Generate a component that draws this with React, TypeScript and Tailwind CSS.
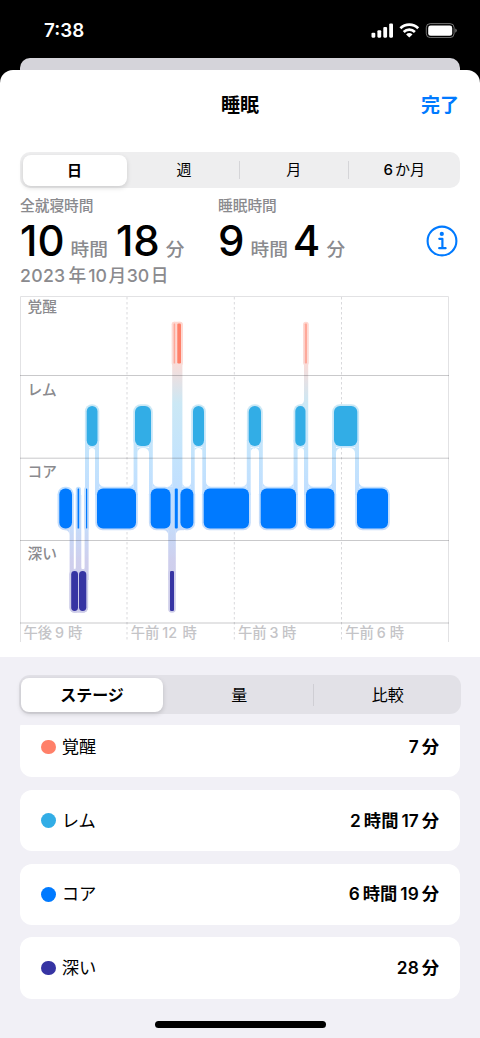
import clsx from "clsx";

type Stage = "awake" | "rem" | "core" | "deep";

interface Segment {
  stage: Stage;
  from: number;
  to: number;
  faded?: boolean;
}

const STAGES: Record<Stage, { label: string; color: string; top: number }> = {
  awake: { label: "覚醒", color: "#ff8069", top: 323.5 },
  rem: { label: "レム", color: "#32ade6", top: 406 },
  core: { label: "コア", color: "#007aff", top: 488.5 },
  deep: { label: "深い", color: "#3634a3", top: 571 },
};

const BLOCK_HEIGHT = 40;

const SEGMENTS: Segment[] = [
  { stage: "core", from: 59.3, to: 72 },
  { stage: "deep", from: 71.2, to: 78 },
  { stage: "core", from: 77.6, to: 79.2 },
  { stage: "deep", from: 79, to: 86.3 },
  { stage: "core", from: 86, to: 87.2 },
  { stage: "rem", from: 86.7, to: 97.5 },
  { stage: "core", from: 97, to: 136 },
  { stage: "rem", from: 135, to: 151 },
  { stage: "core", from: 150.7, to: 170.5 },
  { stage: "deep", from: 170, to: 174 },
  { stage: "awake", from: 173.6, to: 175.2, faded: true },
  { stage: "core", from: 174.8, to: 177.8 },
  { stage: "awake", from: 177.3, to: 181 },
  { stage: "core", from: 180.4, to: 193.4 },
  { stage: "rem", from: 193, to: 204 },
  { stage: "core", from: 203.7, to: 249 },
  { stage: "rem", from: 248.7, to: 261 },
  { stage: "core", from: 260.7, to: 296 },
  { stage: "rem", from: 295.3, to: 305.5 },
  { stage: "awake", from: 304.8, to: 307, faded: true },
  { stage: "core", from: 306, to: 334.4 },
  { stage: "rem", from: 334, to: 357.3 },
  { stage: "core", from: 357, to: 388 },
];

// vertical links between two stages: [x1, x2, y1, y2]
const LINKS = [
  [85, 89, 440, 495],
  [95, 99, 440, 495],
  [133.6, 137.4, 440, 495],
  [149, 152.8, 440, 495],
  [191, 194.7, 440, 495],
  [202.3, 206, 440, 495],
  [246.8, 250.7, 440, 495],
  [259, 262.8, 440, 495],
  [293.6, 297.6, 440, 495],
  [304, 308.2, 330, 495],
  [332, 336, 440, 495],
  [355, 359, 440, 495],
  [172.2, 182.4, 328, 500],
  [69.6, 73.8, 520, 580],
  [75.8, 81.3, 495, 580],
  [84.6, 88.6, 495, 580],
  [168.2, 175.8, 515, 580],
  // keeps the close-set blocks around midnight joined
  [168, 184, 487, 530.2],
];

// concave corners: [x, y, dx, dy, r]
const FILLETS = [
  [89, 448, 1, 1, 3],
  [95, 448, -1, 1, 3],
  [137.4, 448, 1, 1, 5],
  [149, 448, -1, 1, 5],
  [194.7, 448, 1, 1, 3.8],
  [202.3, 448, -1, 1, 3.8],
  [250.7, 448, 1, 1, 4.2],
  [259, 448, -1, 1, 4.2],
  [297.6, 448, 1, 1, 3.2],
  [304, 448, -1, 1, 3.2],
  [336, 448, 1, 1, 5],
  [355, 448, -1, 1, 5],
  [99, 486.7, 1, -1, 5],
  [133.6, 486.7, -1, -1, 5],
  [152.8, 486.7, 1, -1, 5],
  [172.2, 486.7, -1, -1, 5],
  [182.4, 486.7, 1, -1, 4.3],
  [191, 486.7, -1, -1, 4.3],
  [206, 486.7, 1, -1, 5],
  [246.8, 486.7, -1, -1, 5],
  [262.8, 486.7, 1, -1, 5],
  [293.6, 486.7, -1, -1, 5],
  [308.2, 486.7, 1, -1, 5],
  [332, 486.7, -1, -1, 5],
  [359, 486.7, 1, -1, 5],
  [304, 405, -1, -1, 5],
  [69.6, 530, -1, 1, 5],
  [168.2, 530, -1, 1, 5],
  [175.8, 530, 1, 1, 5],
  [73.8, 569.5, 1, -1, 2.5],
  [75.8, 569.5, -1, -1, 2.5],
  [81.3, 569.5, 1, -1, 2.5],
  [84.6, 569.5, -1, -1, 2.5],
];

function filletPath([x, y, dx, dy, r]: number[]) {
  const sweep = dx * dy > 0 ? 0 : 1;
  return `M${x} ${y}h${dx * r}A${r} ${r} 0 0 ${sweep} ${x} ${y + dy * r}z`;
}

function SleepChart() {
  return (
    <svg className="block w-[440px] h-[350px]" viewBox="20 295 440 350">
      <defs>
        <linearGradient
          id="trail"
          gradientUnits="userSpaceOnUse"
          x1="0"
          y1="322"
          x2="0"
          y2="613"
        >
          <stop offset="0" stopColor="#ffd8d1" />
          <stop offset="0.14" stopColor="#fadcd8" />
          <stop offset="0.28" stopColor="#cbe8f5" />
          <stop offset="0.45" stopColor="#c4e4fc" />
          <stop offset="0.6" stopColor="#c0deff" />
          <stop offset="0.7" stopColor="#c5dcfa" />
          <stop offset="0.82" stopColor="#cfcfed" />
          <stop offset="1" stopColor="#cdcce8" />
        </linearGradient>
      </defs>

      <g stroke="#d9d9dc" strokeDasharray="2.5 2.5">
        <path d="M127 297V642M234.3 297V642M341.5 297V642" />
      </g>
      <path d="M20.5 642V296.5H448.5V642" fill="none" stroke="#e2e2e4" />

      <g fill="url(#trail)">
        {SEGMENTS.map((s, i) => (
          <rect
            key={i}
            x={s.from - 1.8}
            y={STAGES[s.stage].top - 1.8}
            width={s.to - s.from + 3.6}
            height={BLOCK_HEIGHT + 3.6}
            rx={Math.min(7.5, (s.to - s.from + 3.6) / 2)}
          />
        ))}
        {LINKS.map(([x1, x2, y1, y2], i) => (
          <rect key={i} x={x1} y={y1} width={x2 - x1} height={y2 - y1} />
        ))}
        <rect x="171.8" y="321.7" width="11" height="44" rx="2.5" />
        <rect x="69.5" y="569.2" width="18.6" height="43.6" rx="5" />
        <path d={FILLETS.map(filletPath).join("")} />
      </g>

      <path
        d="M20 375.5H449M20 458.2H449M20 540.5H449M20 623H449"
        stroke="#3c3c43"
        strokeOpacity="0.28"
      />

      {SEGMENTS.map((s, i) => (
        <rect
          key={i}
          x={s.from}
          y={STAGES[s.stage].top}
          width={s.to - s.from}
          height={BLOCK_HEIGHT}
          rx={Math.min(6, (s.to - s.from) / (s.to - s.from < 4.5 ? 3 : 2))}
          fill={STAGES[s.stage].color}
          opacity={s.faded ? 0.55 : 1}
        />
      ))}

      <g
        className="font-['Inter','Noto_Sans_CJK_JP',sans-serif] font-medium"
        fontSize="14.7"
        fill="#8a8a8e"
      >
        <text x="27.5" y="312.3">覚醒</text>
        <text x="27.5" y="394.7">レム</text>
        <text x="27.5" y="477">コア</text>
        <text x="27.5" y="559.3">深い</text>
      </g>
      <g
        className="font-['Inter','Noto_Sans_CJK_JP',sans-serif] font-medium"
        fontSize="14.3"
        fill="#c4c4c7"
      >
        <text y="638">
          <tspan x="23.5">午後</tspan>
          <tspan x="55">9</tspan>
          <tspan x="68">時</tspan>
        </text>
        <text y="638">
          <tspan x="130.8">午前</tspan>
          <tspan x="162.3">12</tspan>
          <tspan x="182.5">時</tspan>
        </text>
        <text y="638">
          <tspan x="238">午前</tspan>
          <tspan x="269.5">3</tspan>
          <tspan x="282">時</tspan>
        </text>
        <text y="638">
          <tspan x="345.3">午前</tspan>
          <tspan x="376.8">6</tspan>
          <tspan x="389.8">時</tspan>
        </text>
      </g>
    </svg>
  );
}

function StatusBar() {
  return (
    <div className="h-[58px] flex justify-between items-start pl-11 pr-[22px] pt-[21px] text-white">
      <span className="text-[18.8px] leading-5 font-semibold">7:38</span>
      <svg className="w-[88px] h-4 mt-[1px]" viewBox="370 22 88 16">
        <g fill="currentColor">
          <rect x="371.5" y="32.7" width="3.8" height="5" rx="1.1" />
          <rect x="377.4" y="30.2" width="3.8" height="7.5" rx="1.1" />
          <rect x="383.3" y="27" width="3.8" height="10.7" rx="1.1" />
          <rect x="389.2" y="23.4" width="3.8" height="14.3" rx="1.1" />
          <path d="M409.3 37.6l-3.2-3.2a4.6 4.6 0 0 1 6.4 0z" />
          <rect x="428.2" y="25.6" width="24" height="10.2" rx="2.4" />
        </g>
        <g fill="none" stroke="currentColor" strokeWidth="2.7">
          <path d="M400.4 28.2a12.8 12.8 0 0 1 17.8 0" />
          <path d="M403.7 31.9a8.1 8.1 0 0 1 11.2 0" />
        </g>
        <rect
          x="426.3"
          y="23.6"
          width="27.8"
          height="14"
          rx="4"
          fill="none"
          stroke="#fff"
          strokeOpacity="0.45"
        />
        <path d="M455.3 28.4v4.4a2.4 2.4 0 0 0 0-4.4z" fill="#fff" fillOpacity="0.5" />
      </svg>
    </div>
  );
}

function InfoIcon() {
  return (
    <svg
      className="w-8 h-8"
      viewBox="0 0 32 32"
      fill="none"
      stroke="#007aff"
      strokeWidth="2.1"
    >
      <circle cx="16" cy="16" r="14.4" />
      <circle cx="15.8" cy="8.9" r="2.1" fill="#007aff" stroke="none" />
      <path
        d="M13.3 13.8H16.4V23.1M13.2 23.2H19.6"
        strokeWidth="2.2"
        strokeLinecap="round"
        strokeLinejoin="round"
      />
    </svg>
  );
}

function Amount({ value, unit, className }: { value: string; unit: string; className?: string }) {
  return (
    <span className={clsx("flex items-baseline", className)}>
      <span className="text-[42px] leading-[42px] font-medium text-black">{value}</span>
      <span className="ml-[6px] text-[18.7px] leading-[20px] font-medium text-[#8a8a8e]">
        {unit}
      </span>
    </span>
  );
}

function Duration({ parts }: { parts: string[] }) {
  return (
    <span className="flex gap-[3px] text-[17.3px] font-bold">
      {parts.map((p) => (
        <span key={p} className={/\d/.test(p) ? "font-semibold" : ""}>
          {p}
        </span>
      ))}
    </span>
  );
}

const ROWS: { stage: Stage; parts: string[] }[] = [
  { stage: "awake", parts: ["7", "分"] },
  { stage: "rem", parts: ["2", "時間", "17", "分"] },
  { stage: "core", parts: ["6", "時間", "19", "分"] },
  { stage: "deep", parts: ["28", "分"] },
];

export default function App() {
  return (
    <div className="w-[480px] h-[1038px] bg-black overflow-hidden flex flex-col font-['Inter','Noto_Sans_CJK_JP',sans-serif]">
      <StatusBar />
      <div className="h-3 mx-5 shrink-0 rounded-t-[10px] bg-[#d5d4da]" />

      <div className="flex-1 min-h-0 flex flex-col rounded-t-[13px] bg-white overflow-hidden">
        <header className="h-[82px] shrink-0 grid grid-cols-3 items-start px-[21px] pt-[22px] text-[19px] leading-7">
          <span />
          <h1 className="text-center font-bold">睡眠</h1>
          <button className="text-right font-bold text-[#007aff]">完了</button>
        </header>

        <div className="h-9 shrink-0 mx-5 p-[2.5px] flex items-center rounded-[10px] bg-[#eeeeef] text-[15px] text-center">
          <span className="w-[104px] h-[31px] leading-[32px] rounded-[8px] bg-white font-bold shadow-[0_2px_5px_rgba(0,0,0,0.14)]">
            日
          </span>
          <span className="flex-1 pl-[3px] pt-px">週</span>
          <span className="w-px h-[18px] bg-[#d5d5d8]" />
          <span className="w-[108.5px] pt-px">月</span>
          <span className="w-px h-[18px] bg-[#d5d5d8]" />
          <span className="w-[108.5px] pl-[2px] pt-px flex justify-center gap-[2px]">
            <span className="font-medium">6</span>か月
          </span>
        </div>

        <section className="h-[107px] shrink-0 pl-5 pr-[22.3px] flex">
          <div className="w-[198px] pt-[8px]">
            <p className="text-[14.7px] leading-5 font-medium text-[#8a8a8e]">全就寝時間</p>
            <div className="h-[47px] pt-1 flex items-baseline">
              <Amount value="10" unit="時間" className="-mr-px" />
              <Amount value="18" unit="分" className="ml-[9px]" />
            </div>
            <p className="flex whitespace-nowrap text-[17.7px] leading-[26px] font-medium text-[#8a8a8e]">
              <span className="tracking-[0.3px]">2023</span>
              <span className="ml-[3px]">年</span>
              <span className="ml-[2px]">10</span>
              <span className="ml-[1.5px]">月</span>
              <span className="ml-[0.5px]">30</span>
              <span className="ml-[1.5px]">日</span>
            </p>
          </div>
          <div className="flex-1 pt-[8px]">
            <p className="text-[14.7px] leading-5 font-medium text-[#8a8a8e]">睡眠時間</p>
            <div className="h-[47px] pt-1 flex items-baseline">
              <Amount value="9" unit="時間" />
              <Amount value="4" unit="分" className="ml-[5px]" />
            </div>
          </div>
          <div className="pt-[37px]">
            <InfoIcon />
          </div>
        </section>

        <div className="h-[362px] shrink-0 pl-5">
          <SleepChart />
        </div>

        <div className="flex-1 min-h-0 flex flex-col bg-[#f1f0f6]">
          <div className="h-[39px] shrink-0 mt-[18px] mx-[19px] p-[2px] flex items-center rounded-[11px] bg-[#e2e1e7] text-[16px] text-center">
            <span className="w-[142px] h-[34px] leading-[34px] rounded-[8px] bg-white font-bold shadow-[0_2px_5px_rgba(0,0,0,0.16)]">
              ステージ
            </span>
            <span className="flex-1 pl-[3px]">量</span>
            <span className="w-px h-[22px] bg-[#cfced4]" />
            <span className="w-[145.5px] pl-[3px]">比較</span>
          </div>

          <ul className="h-[273.5px] shrink-0 mt-[11px] mx-5 flex flex-col justify-end gap-[12.5px] overflow-hidden">
            {ROWS.map(({ stage, parts }) => (
              <li
                key={stage}
                className="h-[61.2px] shrink-0 px-[21px] flex items-center rounded-[12px] bg-white text-[17.3px]"
              >
                <span
                  className="w-[14.7px] h-[14.7px] mr-[6px] rounded-full"
                  style={{ backgroundColor: STAGES[stage].color }}
                />
                <span className="flex-1">{STAGES[stage].label}</span>
                <Duration parts={parts} />
              </li>
            ))}
          </ul>

          <div className="w-[171px] h-[6.5px] mt-[22.5px] mx-auto rounded-full bg-black" />
        </div>
      </div>
    </div>
  );
}
